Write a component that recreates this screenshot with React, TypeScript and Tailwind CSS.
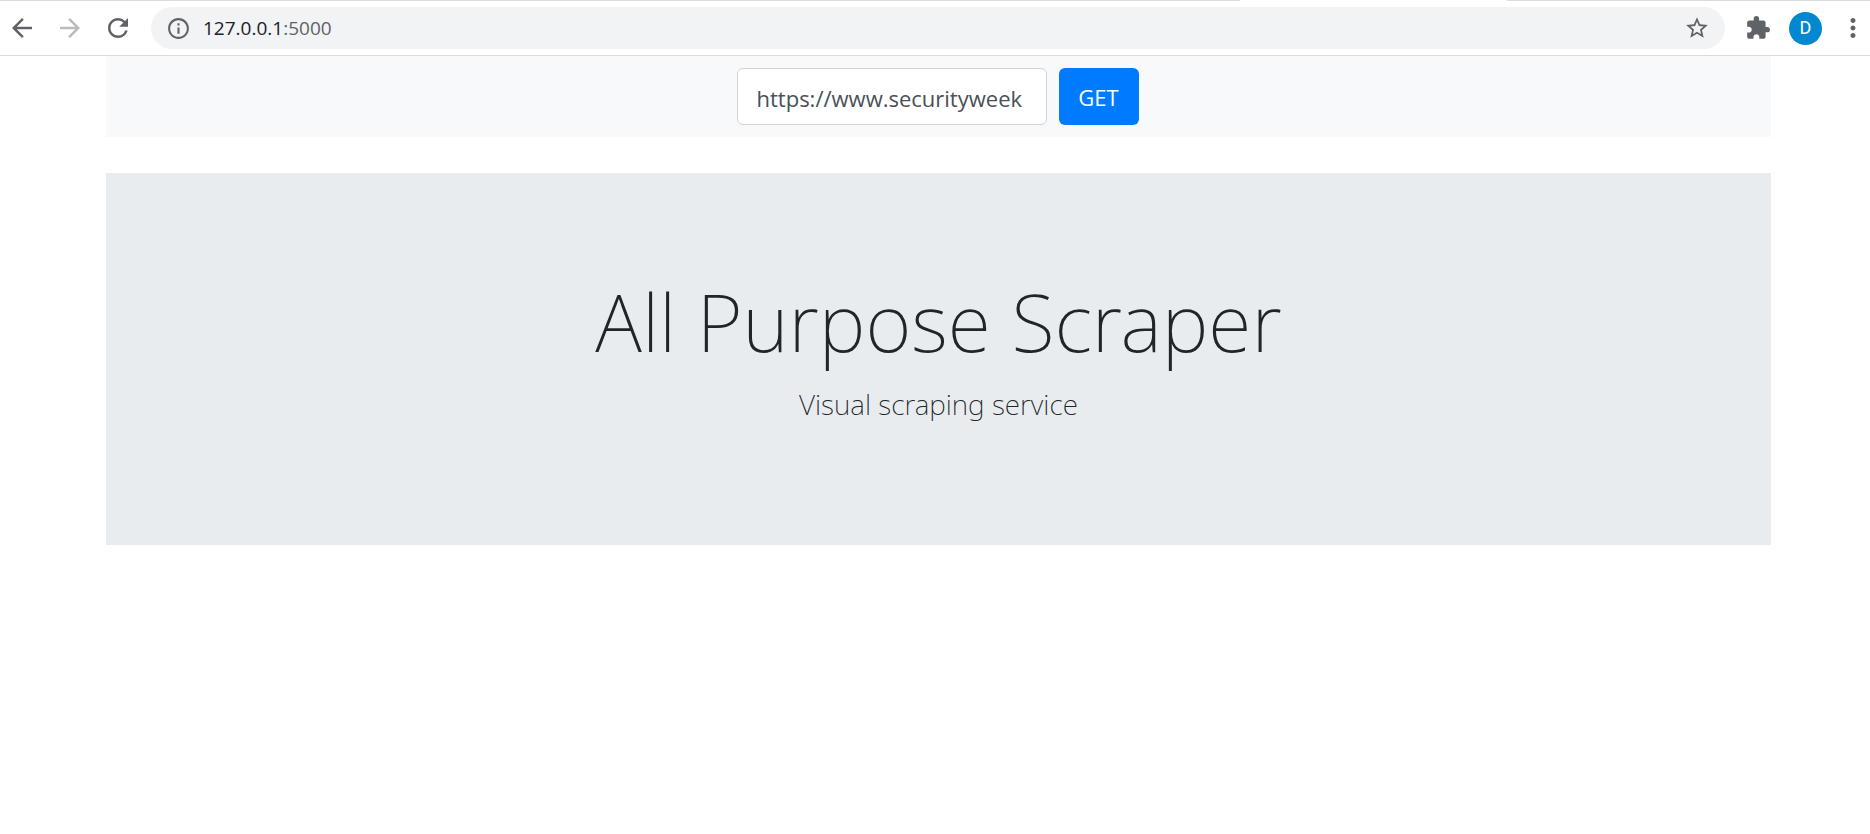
import React from "react";
import {
  MdArrowBack,
  MdArrowForward,
  MdExtension,
  MdInfoOutline,
  MdMoreVert,
  MdRefresh,
  MdStarBorder,
} from "react-icons/md";

function BrowserBar() {
  return (
    <header className="relative flex h-14 items-center border-y border-[#dadce0] bg-white pr-0.5 pl-[7px] text-[#5f6368]">
      <div className="absolute -top-px left-[66.3%] h-px w-[14.3%] bg-white" />
      <nav aria-label="History" className="flex gap-[18px]">
        <button type="button" aria-label="Back">
          <MdArrowBack size={30} />
        </button>
        <button type="button" aria-label="Forward" className="text-[#babcbe]">
          <MdArrowForward size={30} />
        </button>
        <button type="button" aria-label="Reload">
          <MdRefresh size={30} />
        </button>
      </nav>
      <div className="ml-[18px] flex h-[42px] flex-1 items-center rounded-full bg-[#f1f3f4] px-[15px]">
        <button type="button" aria-label="Site information">
          <MdInfoOutline size={25} />
        </button>
        <p className="ml-3 flex-1 text-[19px] leading-6">
          <span className="text-[#202124]">127.0.0.1</span>:5000
        </p>
        <button type="button" aria-label="Bookmark this page">
          <MdStarBorder size={26} />
        </button>
      </div>
      <button type="button" aria-label="Extensions" className="ml-5">
        <MdExtension size={26} />
      </button>
      <button
        type="button"
        aria-label="Profile"
        className="ml-[18px] size-[33px] rounded-full bg-[#0288d1] font-['Roboto',sans-serif] text-[18px] leading-none text-white"
      >
        D
      </button>
      <button type="button" aria-label="Menu" className="ml-4">
        <MdMoreVert size={30} />
      </button>
    </header>
  );
}

export default function App() {
  return (
    <div className="font-['Open_Sans','Noto_Sans',sans-serif] text-[#212529]">
      <BrowserBar />
      <main className="pr-[99px] pl-[106px]">
        <form
          className="flex justify-center gap-3 bg-[#f8f9fa] py-3 pr-0.5"
          onSubmit={(event) => event.preventDefault()}
        >
          <input
            type="text"
            aria-label="Page address"
            defaultValue="https://www.securityweek"
            className="h-[57px] w-[310px] rounded-md border border-[#ced4da] bg-white px-[19px] pt-0.5 text-[22px] text-[#495057]"
          />
          <button
            type="submit"
            className="h-[57px] w-20 rounded-md bg-[#007bff] pt-0.5 text-[22px] text-white"
          >
            GET
          </button>
        </form>
        <section className="mt-9 bg-[#e9ecef] pt-[93px] pb-[118px] text-center font-['Noto_Sans','Open_Sans',sans-serif] font-extralight">
          <h1 className="text-[79px] leading-[112px]">All Purpose Scraper</h1>
          <p className="mt-1 text-[28px] leading-[45px]">Visual scraping service</p>
        </section>
      </main>
    </div>
  );
}
